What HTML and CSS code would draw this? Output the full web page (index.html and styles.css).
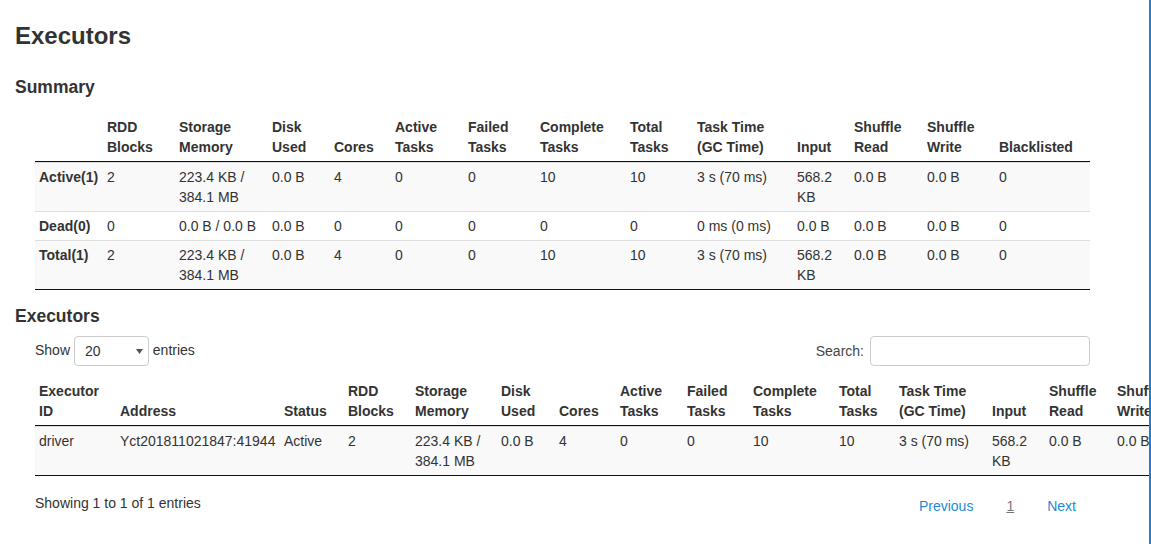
FILE: index.html
```html
<!DOCTYPE html>
<html lang="en">
<head>
<meta charset="utf-8">
<title>Executors</title>
<link rel="stylesheet" href="styles.css">
</head>
<body>
<div class="page">
  <div class="content">
    <h3 class="title">Executors</h3>

    <h4 class="section">Summary</h4>
    <table class="tbl summary">
      <colgroup>
        <col><col><col><col><col><col><col><col><col><col><col><col><col><col>
      </colgroup>
      <thead>
        <tr>
          <th></th>
          <th>RDD Blocks</th>
          <th>Storage Memory</th>
          <th>Disk Used</th>
          <th>Cores</th>
          <th>Active Tasks</th>
          <th>Failed Tasks</th>
          <th>Complete Tasks</th>
          <th>Total Tasks</th>
          <th>Task Time (GC Time)</th>
          <th>Input</th>
          <th>Shuffle Read</th>
          <th>Shuffle Write</th>
          <th>Blacklisted</th>
        </tr>
      </thead>
      <tbody>
        <tr>
          <td>Active(1)</td><td>2</td><td>223.4 KB / 384.1 MB</td><td>0.0 B</td><td>4</td><td>0</td><td>0</td><td>10</td><td>10</td><td>3 s (70 ms)</td><td>568.2 KB</td><td>0.0 B</td><td>0.0 B</td><td>0</td>
        </tr>
        <tr>
          <td>Dead(0)</td><td>0</td><td>0.0 B / 0.0 B</td><td>0.0 B</td><td>0</td><td>0</td><td>0</td><td>0</td><td>0</td><td>0 ms (0 ms)</td><td>0.0 B</td><td>0.0 B</td><td>0.0 B</td><td>0</td>
        </tr>
        <tr>
          <td>Total(1)</td><td>2</td><td>223.4 KB / 384.1 MB</td><td>0.0 B</td><td>4</td><td>0</td><td>0</td><td>10</td><td>10</td><td>3 s (70 ms)</td><td>568.2 KB</td><td>0.0 B</td><td>0.0 B</td><td>0</td>
        </tr>
      </tbody>
    </table>

    <h4 class="section second">Executors</h4>
    <div class="dt-wrapper">
      <div class="dt-top">
        <label class="dt-length">Show <span class="select-wrap"><select class="dt-select"><option>20</option><option>40</option><option>60</option><option>100</option></select><svg class="select-arrow" viewBox="0 0 7 5" width="7" height="5"><path d="M0 0H7L3.5 5Z" fill="#555"/></svg></span> entries</label>
        <label class="dt-filter">Search:<input class="dt-search" type="search"></label>
      </div>
      <table class="tbl execs">
        <colgroup>
          <col><col><col><col><col><col><col><col><col><col><col><col><col><col><col><col><col>
        </colgroup>
        <thead>
          <tr>
            <th>Executor ID</th>
            <th>Address</th>
            <th>Status</th>
            <th>RDD Blocks</th>
            <th>Storage Memory</th>
            <th>Disk Used</th>
            <th>Cores</th>
            <th>Active Tasks</th>
            <th>Failed Tasks</th>
            <th>Complete Tasks</th>
            <th>Total Tasks</th>
            <th>Task Time (GC Time)</th>
            <th>Input</th>
            <th>Shuffle Read</th>
            <th>Shuffle Write</th>
            <th>Logs</th>
            <th>Thread Dump</th>
          </tr>
        </thead>
        <tbody>
          <tr>
            <td>driver</td><td class="nowrap">Yct201811021847:41944</td><td>Active</td><td>2</td><td>223.4 KB / 384.1 MB</td><td>0.0 B</td><td>4</td><td>0</td><td>0</td><td>10</td><td>10</td><td>3 s (70 ms)</td><td>568.2 KB</td><td>0.0 B</td><td>0.0 B</td><td></td><td>Thread Dump</td>
          </tr>
        </tbody>
      </table>
      <div class="dt-bottom">
        <div class="dt-info">Showing 1 to 1 of 1 entries</div>
        <div class="dt-paginate">
          <a class="page-btn" href="#">Previous</a>
          <a class="page-btn current" href="#">1</a>
          <a class="page-btn" href="#">Next</a>
        </div>
      </div>
    </div>
  </div>
</div>
</body>
</html>
```

FILE: styles.css
```css
html, body {
  margin: 0;
  padding: 0;
  background: #fff;
}

body {
  font-family: "Liberation Sans", Arial, Helvetica, sans-serif;
  font-size: 14px;
  line-height: 20px;
  color: #333;
}

.page {
  width: 1149px;
  height: 544px;
  overflow: hidden;
  border-right: 2px solid #1a7fd6;
}

.content {
  padding-left: 15px;
}

.title {
  font-size: 24px;
  line-height: 26px;
  font-weight: bold;
  margin: 23px 0 28px;
}

.section {
  font-size: 17.5px;
  line-height: 20px;
  font-weight: bold;
  margin: 0 0 16px;
}

.section.second {
  margin-top: 16px;
  margin-bottom: 10px;
}

.tbl {
  border-collapse: separate;
  border-spacing: 0;
  table-layout: fixed;
}

.tbl th,
.tbl td {
  padding: 4px;
  text-align: left;
  vertical-align: top;
}

.tbl th {
  vertical-align: bottom;
  font-weight: bold;
  border-bottom: 1px solid #111;
}

.tbl td {
  border-top: 1px solid #ddd;
}

.tbl tbody tr:last-child td {
  border-bottom: 1px solid #111;
}

.tbl tbody tr:nth-child(odd) td {
  background: #f9f9f9;
}

.nowrap {
  white-space: nowrap;
}

/* Summary table */
.summary {
  width: 1055px;
  margin-left: 20px;
}

.summary td:first-child {
  font-weight: bold;
  white-space: nowrap;
}

.summary col:nth-child(1) { width: 68px; }
.summary col:nth-child(2) { width: 72px; }
.summary col:nth-child(3) { width: 93px; }
.summary col:nth-child(4) { width: 62px; }
.summary col:nth-child(5) { width: 61px; }
.summary col:nth-child(6) { width: 73px; }
.summary col:nth-child(7) { width: 72px; }
.summary col:nth-child(8) { width: 90px; }
.summary col:nth-child(9) { width: 67px; }
.summary col:nth-child(10) { width: 100px; }
.summary col:nth-child(11) { width: 57px; }
.summary col:nth-child(12) { width: 73px; }
.summary col:nth-child(13) { width: 72px; }
.summary col:nth-child(14) { width: 95px; }

/* DataTable wrapper */
.dt-wrapper {
  margin-left: 20px;
  width: 1055px;
}

.dt-top {
  display: flex;
  justify-content: space-between;
  align-items: center;
  height: 30px;
  margin-bottom: 11px;
}

.dt-length {
  color: #333;
}

.select-wrap {
  position: relative;
  display: inline-block;
  vertical-align: middle;
}

.dt-select {
  -webkit-appearance: none;
  appearance: none;
  display: block;
  width: 75px;
  height: 30px;
  box-sizing: border-box;
  border: 1px solid #ccc;
  border-radius: 4px;
  padding: 0 0 0 10px;
  font-family: inherit;
  font-size: 14px;
  color: #333;
  background: #fff;
  outline: none;
}

.select-arrow {
  position: absolute;
  right: 6px;
  top: 13px;
  pointer-events: none;
}

.dt-filter {
  display: flex;
  align-items: center;
  color: #444;
}

.dt-search {
  width: 220px;
  height: 30px;
  box-sizing: border-box;
  margin-left: 6px;
  border: 1px solid #ccc;
  border-radius: 4px;
  background: #fff;
  padding: 0 8px;
  font-family: inherit;
  font-size: 14px;
  outline: none;
}

/* Executors table */
.execs {
  width: 1308px;
}

.execs col:nth-child(1) { width: 81px; }
.execs col:nth-child(2) { width: 164px; }
.execs col:nth-child(3) { width: 64px; }
.execs col:nth-child(4) { width: 67px; }
.execs col:nth-child(5) { width: 86px; }
.execs col:nth-child(6) { width: 58px; }
.execs col:nth-child(7) { width: 61px; }
.execs col:nth-child(8) { width: 67px; }
.execs col:nth-child(9) { width: 66px; }
.execs col:nth-child(10) { width: 86px; }
.execs col:nth-child(11) { width: 60px; }
.execs col:nth-child(12) { width: 93px; }
.execs col:nth-child(13) { width: 57px; }
.execs col:nth-child(14) { width: 68px; }
.execs col:nth-child(15) { width: 70px; }
.execs col:nth-child(16) { width: 60px; }
.execs col:nth-child(17) { width: 100px; }

.dt-bottom {
  display: flex;
  justify-content: space-between;
  align-items: flex-start;
  margin-top: 17px;
}

.dt-info {
  line-height: 20px;
}

.dt-paginate {
  display: flex;
  gap: 33px;
  padding-top: 3px;
  padding-right: 14px;
}

.page-btn {
  color: #1f8ad6;
  text-decoration: none;
}

.page-btn.current {
  color: #777;
  text-decoration: underline;
}
```
